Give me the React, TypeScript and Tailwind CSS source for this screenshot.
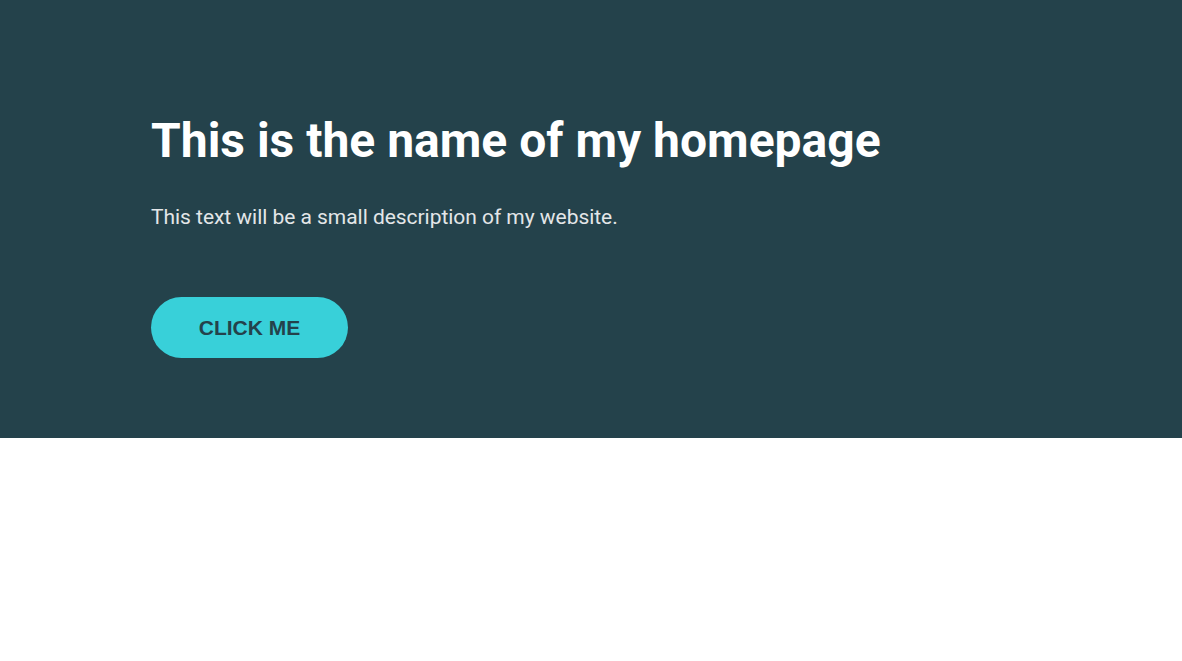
export default function App() {
  return (
    <div className="w-full bg-white min-h-[661px]">
      <section className="bg-[#24424b] h-[438px] px-[151px] pt-[112px]">
        <h1 className="text-white text-[48px] font-bold leading-[58px] font-['Roboto',sans-serif]">
          This is the name of my homepage
        </h1>
        <p className="mt-[35px] text-[#e3e6e8] text-[21px] leading-[24px] tracking-[-0.04px] font-['Roboto',sans-serif]">
          This text will be a small description of my website.
        </p>
        <button className="mt-[68px] w-[197px] h-[61px] rounded-full bg-[#38d0d9] text-[#24424b] text-[21px] font-bold font-['Liberation_Sans',Arial,sans-serif]">
          CLICK ME
        </button>
      </section>
    </div>
  );
}
